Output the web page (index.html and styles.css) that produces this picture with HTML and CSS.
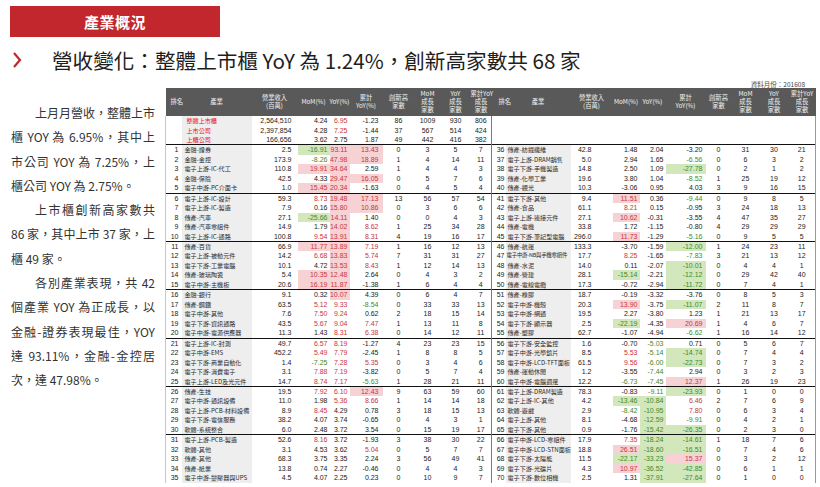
FILE: index.html
```html
<!DOCTYPE html>
<html lang="zh-Hant">
<head>
<meta charset="utf-8">
<title>產業概況</title>
<link rel="stylesheet" href="styles.css">
</head>
<body>
<div class="banner">產業概況</div>
<div class="title">
  <svg class="chev" viewBox="0 0 10 16"><polyline points="2,1 8,8 2,15"/></svg>
  <h1>營收變化：整體上市櫃 YoY 為 1.24%，創新高家數共 68 家</h1>
</div>
<div class="main">
  <div class="intro">
    <p class="ln first">上月月營收，整體上市</p>
    <p class="ln">櫃 YOY 為 6.95%，其中上</p>
    <p class="ln">市公司 YOY 為 7.25%，上</p>
    <p class="ln end">櫃公司 YOY 為 2.75%。</p>
    <p class="ln first">上市櫃創新高家數共</p>
    <p class="ln">86 家，其中上市 37 家，上</p>
    <p class="ln end">櫃 49 家。</p>
    <p class="ln first">各別產業表現，共 42</p>
    <p class="ln">個產業 YOY 為正成長，以</p>
    <p class="ln">金融-證券表現最佳，YOY</p>
    <p class="ln">達 93.11%，金融-金控居</p>
    <p class="ln end">次，達 47.98%。</p>
  </div>
  <div class="sheet">
    <div class="asof">資料月份：201608</div>
    <table class="grid">
      <thead>
        <tr>
          <th>排名</th><th>產業</th><th>營業收入<br>(百萬)</th><th>MoM(%)</th><th>YoY(%)</th><th>累計<br>YoY(%)</th><th>創新高<br>家數</th><th>MoM<br>成長<br>家數</th><th>YoY<br>成長<br>家數</th><th>累計YoY<br>成長<br>家數</th>
          <th>排名</th><th>產業</th><th>營業收入<br>(百萬)</th><th>MoM(%)</th><th>YoY(%)</th><th>累計<br>YoY(%)</th><th>創新高<br>家數</th><th>MoM<br>成長<br>家數</th><th>YoY<br>成長<br>家數</th><th>累計YoY<br>成長<br>家數</th>
        </tr>
      </thead>
      <tbody>
        <tr class="sum"><td></td><td>整體上市櫃</td><td>2,564,510</td><td>4.24</td><td class="up">6.95</td><td>-1.23</td><td>86</td><td>1009</td><td>930</td><td>806</td><td></td><td></td><td></td><td></td><td></td><td></td><td></td><td></td><td></td><td></td></tr>
        <tr class="sum"><td></td><td>上市公司</td><td>2,397,854</td><td>4.28</td><td class="up">7.25</td><td>-1.44</td><td>37</td><td>567</td><td>514</td><td>424</td><td></td><td></td><td></td><td></td><td></td><td></td><td></td><td></td><td></td><td></td></tr>
        <tr class="sum"><td></td><td>上櫃公司</td><td>166,656</td><td>3.62</td><td>2.75</td><td>1.87</td><td>49</td><td>442</td><td>416</td><td>382</td><td></td><td></td><td></td><td></td><td></td><td></td><td></td><td></td><td></td><td></td></tr>

        <tr class="grp"><td>1</td><td>金融-證券</td><td>2.5</td><td class="lo">-16.91</td><td class="hi">93.11</td><td class="hi">13.43</td><td>0</td><td>3</td><td>5</td><td>7</td><td>36</td><td>傳產-紡織纖維</td><td>42.8</td><td>1.48</td><td>2.04</td><td>-3.20</td><td>0</td><td>31</td><td>30</td><td>21</td></tr>
        <tr><td>2</td><td>金融-金控</td><td>173.9</td><td class="dn">-8.26</td><td class="hi">47.98</td><td class="hi">18.89</td><td>1</td><td>4</td><td>14</td><td>11</td><td>37</td><td>電子上游-DRAM銷售</td><td>5.0</td><td>2.94</td><td>1.65</td><td class="dn">-6.56</td><td>0</td><td>6</td><td>3</td><td>2</td></tr>
        <tr><td>3</td><td>電子上游-IC-代工</td><td>110.8</td><td class="hi">19.91</td><td class="hi">34.64</td><td>2.59</td><td>1</td><td>4</td><td>4</td><td>3</td><td>38</td><td>電子下游-手機製造</td><td>14.8</td><td>2.50</td><td>1.09</td><td class="lo">-27.78</td><td>0</td><td>2</td><td>1</td><td>2</td></tr>
        <tr><td>4</td><td>金融-保險</td><td>42.5</td><td>4.33</td><td class="hi">29.47</td><td class="hi">16.05</td><td>0</td><td>5</td><td>7</td><td>6</td><td>39</td><td>傳產-化學工業</td><td>19.6</td><td>3.80</td><td>1.04</td><td class="dn">-8.52</td><td>1</td><td>25</td><td>19</td><td>12</td></tr>
        <tr><td>5</td><td>電子中游-PC介面卡</td><td>1.0</td><td class="hi">15.45</td><td class="hi">20.34</td><td>-1.63</td><td>0</td><td>4</td><td>5</td><td>4</td><td>40</td><td>傳產-觀光</td><td>10.3</td><td>-3.06</td><td>0.95</td><td>4.03</td><td>3</td><td>9</td><td>16</td><td>15</td></tr>

        <tr class="grp"><td>6</td><td>電子上游-IC-設計</td><td>59.3</td><td class="up">8.73</td><td class="hi">19.48</td><td class="hi">17.13</td><td>13</td><td>56</td><td>57</td><td>54</td><td>41</td><td>電子下游-其他</td><td>9.4</td><td class="hi">11.51</td><td>0.36</td><td class="dn">-9.44</td><td>0</td><td>9</td><td>8</td><td>5</td></tr>
        <tr><td>7</td><td>電子上游-IC-製造</td><td>7.9</td><td>0.16</td><td class="hi">15.80</td><td class="hi">10.86</td><td>0</td><td>3</td><td>6</td><td>6</td><td>42</td><td>傳產-食品</td><td>61.1</td><td class="up">8.21</td><td>0.15</td><td>-0.95</td><td>3</td><td>24</td><td>18</td><td>13</td></tr>
        <tr><td>8</td><td>傳產-汽車</td><td>27.1</td><td class="lo">-25.66</td><td class="hi">14.11</td><td>1.40</td><td>0</td><td>0</td><td>4</td><td>3</td><td>43</td><td>電子上游-連接元件</td><td>27.1</td><td class="hi">10.62</td><td>-0.31</td><td>-3.55</td><td>4</td><td>47</td><td>35</td><td>27</td></tr>
        <tr><td>9</td><td>傳產-汽車零組件</td><td>14.9</td><td>1.79</td><td class="hi">14.02</td><td class="up">8.62</td><td>1</td><td>25</td><td>34</td><td>28</td><td>44</td><td>傳產-電機</td><td>33.8</td><td>1.72</td><td>-1.15</td><td>-0.80</td><td>4</td><td>29</td><td>29</td><td>29</td></tr>
        <tr><td>10</td><td>電子上游-IC-通路</td><td>100.8</td><td class="up">9.54</td><td class="hi">13.91</td><td class="up">8.31</td><td>4</td><td>19</td><td>16</td><td>17</td><td>45</td><td>電子下游-筆記型電腦</td><td>296.0</td><td class="hi">11.73</td><td>-1.29</td><td class="dn">-5.16</td><td>0</td><td>9</td><td>5</td><td>5</td></tr>

        <tr class="grp"><td>11</td><td>傳產-百貨</td><td>66.9</td><td class="hi">11.77</td><td class="hi">13.89</td><td class="up">7.19</td><td>1</td><td>16</td><td>12</td><td>13</td><td>46</td><td>傳產-航運</td><td>133.3</td><td>-3.70</td><td>-1.59</td><td class="lo">-12.00</td><td>1</td><td>24</td><td>23</td><td>11</td></tr>
        <tr><td>12</td><td>電子上游-被動元件</td><td>14.2</td><td class="up">6.68</td><td class="hi">13.83</td><td class="up">5.74</td><td>7</td><td>31</td><td>31</td><td>27</td><td>47</td><td class="tight">電子中游-NB與手機零組件</td><td>17.7</td><td class="up">8.25</td><td>-1.65</td><td class="dn">-7.83</td><td>3</td><td>21</td><td>13</td><td>12</td></tr>
        <tr><td>13</td><td>電子下游-工業電腦</td><td>10.1</td><td>4.72</td><td class="hi">13.53</td><td class="up">8.43</td><td>1</td><td>12</td><td>14</td><td>13</td><td>48</td><td>傳產-水泥</td><td>14.0</td><td>0.11</td><td>-2.07</td><td class="lo">-10.01</td><td>0</td><td>4</td><td>4</td><td>1</td></tr>
        <tr><td>14</td><td>傳產-玻璃陶瓷</td><td>5.4</td><td class="hi">10.35</td><td class="hi">12.48</td><td>2.64</td><td>0</td><td>4</td><td>3</td><td>2</td><td>49</td><td>傳產-營建</td><td>28.1</td><td class="lo">-15.14</td><td>-2.21</td><td class="lo">-12.12</td><td>0</td><td>29</td><td>42</td><td>40</td></tr>
        <tr><td>15</td><td>電子中游-主機板</td><td>20.6</td><td class="hi">16.19</td><td class="hi">11.87</td><td>-1.38</td><td>1</td><td>6</td><td>4</td><td>4</td><td>50</td><td>傳產-電線電纜</td><td>17.3</td><td>-0.72</td><td>-2.94</td><td class="lo">-11.72</td><td>0</td><td>7</td><td>4</td><td>1</td></tr>

        <tr class="grp"><td>16</td><td>金融-銀行</td><td>9.1</td><td>0.32</td><td class="hi">10.07</td><td>4.39</td><td>0</td><td>6</td><td>4</td><td>7</td><td>51</td><td>傳產-橡膠</td><td>18.7</td><td>-0.19</td><td>-3.32</td><td>-3.76</td><td>0</td><td>8</td><td>5</td><td>3</td></tr>
        <tr><td>17</td><td>傳產-鋼鐵</td><td>63.5</td><td class="up">5.12</td><td class="up">9.33</td><td class="dn">-8.54</td><td>0</td><td>33</td><td>33</td><td>13</td><td>52</td><td>電子中游-機殼</td><td>20.3</td><td class="hi">13.90</td><td>-3.75</td><td class="lo">-11.07</td><td>2</td><td>11</td><td>8</td><td>7</td></tr>
        <tr><td>18</td><td>電子中游-其他</td><td>7.6</td><td class="up">7.50</td><td class="up">9.24</td><td>0.62</td><td>2</td><td>18</td><td>15</td><td>14</td><td>53</td><td>電子中游-網通</td><td>19.5</td><td>2.27</td><td>-3.80</td><td>1.23</td><td>1</td><td>21</td><td>13</td><td>17</td></tr>
        <tr><td>19</td><td>電子下游-資訊通路</td><td>43.5</td><td class="up">5.67</td><td class="up">9.04</td><td class="up">7.47</td><td>1</td><td>13</td><td>11</td><td>8</td><td>54</td><td>電子下游-顯示器</td><td>2.5</td><td class="lo">-22.19</td><td>-4.35</td><td class="hi">20.69</td><td>1</td><td>4</td><td>6</td><td>7</td></tr>
        <tr><td>20</td><td>電子中游-電源供應器</td><td>11.3</td><td>1.43</td><td class="up">8.31</td><td class="up">6.38</td><td>0</td><td>14</td><td>12</td><td>11</td><td>55</td><td>傳產-塑膠</td><td>62.7</td><td>-1.07</td><td>-4.94</td><td class="dn">-6.62</td><td>1</td><td>16</td><td>14</td><td>12</td></tr>

        <tr class="grp"><td>21</td><td>電子上游-IC-封測</td><td>49.7</td><td class="up">6.57</td><td class="up">8.19</td><td>-1.27</td><td>4</td><td>23</td><td>23</td><td>15</td><td>56</td><td>電子下游-安全監控</td><td>1.6</td><td>-0.70</td><td class="dn">-5.03</td><td>0.71</td><td>0</td><td>5</td><td>6</td><td>7</td></tr>
        <tr><td>22</td><td>電子中游-EMS</td><td>452.2</td><td class="up">5.49</td><td class="up">7.79</td><td>-2.45</td><td>1</td><td>8</td><td>8</td><td>5</td><td>57</td><td>電子中游-光學鏡片</td><td>8.5</td><td class="up">5.53</td><td class="dn">-5.14</td><td class="lo">-14.74</td><td>0</td><td>7</td><td>4</td><td>4</td></tr>
        <tr><td>23</td><td>電子下游-商業自動化</td><td>1.4</td><td class="dn">-7.25</td><td class="up">7.28</td><td class="up">5.35</td><td>0</td><td>3</td><td>4</td><td>6</td><td>58</td><td>電子中游-LCD-TFT面板</td><td>61.5</td><td class="up">9.56</td><td class="dn">-6.00</td><td class="lo">-22.73</td><td>0</td><td>7</td><td>3</td><td>2</td></tr>
        <tr><td>24</td><td>電子下游-消費電子</td><td>3.1</td><td class="up">7.88</td><td class="up">7.19</td><td>-3.82</td><td>0</td><td>5</td><td>7</td><td>4</td><td>59</td><td>傳產-運動休閒</td><td>1.2</td><td>-3.55</td><td class="dn">-7.44</td><td>2.94</td><td>0</td><td>3</td><td>2</td><td>3</td></tr>
        <tr><td>25</td><td>電子上游-LED及光元件</td><td>14.7</td><td class="up">8.74</td><td class="up">7.17</td><td class="dn">-5.63</td><td>1</td><td>28</td><td>21</td><td>11</td><td>60</td><td>電子中游-電腦週邊</td><td>12.2</td><td class="dn">-6.73</td><td class="dn">-7.45</td><td class="hi">12.37</td><td>1</td><td>26</td><td>19</td><td>23</td></tr>

        <tr class="grp"><td>26</td><td>傳產-生技</td><td>19.5</td><td class="up">7.92</td><td class="up">6.10</td><td class="hi">12.43</td><td>9</td><td>63</td><td>59</td><td>60</td><td>61</td><td>電子上游-DRAM製造</td><td>78.3</td><td>-0.83</td><td class="dn">-9.11</td><td class="lo">-23.93</td><td>0</td><td>1</td><td>0</td><td>0</td></tr>
        <tr><td>27</td><td>電子中游-通訊設備</td><td>11.0</td><td>1.98</td><td class="up">5.36</td><td class="up">8.66</td><td>1</td><td>14</td><td>14</td><td>18</td><td>62</td><td>電子上游-IC-其他</td><td>4.2</td><td class="lo">-13.46</td><td class="lo">-10.84</td><td class="up">6.46</td><td>2</td><td>7</td><td>6</td><td>9</td></tr>
        <tr><td>28</td><td>電子上游-PCB-材料設備</td><td>8.9</td><td class="up">8.45</td><td>4.29</td><td>0.78</td><td>3</td><td>18</td><td>15</td><td>13</td><td>63</td><td>軟體-遊戲</td><td>2.9</td><td class="dn">-8.42</td><td class="lo">-10.95</td><td class="up">7.80</td><td>0</td><td>6</td><td>3</td><td>4</td></tr>
        <tr><td>29</td><td>電子下游-電信服務</td><td>38.2</td><td>4.07</td><td>3.74</td><td>-0.65</td><td>0</td><td>4</td><td>3</td><td>1</td><td>64</td><td>電子上游-其他</td><td>8.1</td><td>-4.68</td><td class="lo">-12.59</td><td class="dn">-9.91</td><td>0</td><td>4</td><td>2</td><td>1</td></tr>
        <tr><td>30</td><td>軟體-系統整合</td><td>6.0</td><td>2.48</td><td>3.72</td><td>3.54</td><td>0</td><td>15</td><td>19</td><td>17</td><td>65</td><td>電子下游-其他</td><td>0.9</td><td>-1.76</td><td class="lo">-15.42</td><td class="lo">-26.35</td><td>0</td><td>2</td><td>3</td><td>0</td></tr>

        <tr class="grp"><td>31</td><td>電子上游-PCB-製造</td><td>52.6</td><td class="up">8.16</td><td>3.72</td><td>-1.93</td><td>3</td><td>38</td><td>30</td><td>22</td><td>66</td><td>電子中游-LCD-零組件</td><td>17.9</td><td class="up">7.35</td><td class="lo">-18.24</td><td class="lo">-14.61</td><td>1</td><td>18</td><td>7</td><td>6</td></tr>
        <tr><td>32</td><td>軟體-其他</td><td>3.1</td><td>4.53</td><td>3.62</td><td class="up">5.04</td><td>0</td><td>5</td><td>7</td><td>7</td><td>67</td><td>電子中游-LCD-STN面板</td><td>18.8</td><td class="hi">26.51</td><td class="lo">-18.60</td><td class="lo">-16.51</td><td>0</td><td>7</td><td>4</td><td>6</td></tr>
        <tr><td>33</td><td>傳產-其他</td><td>68.3</td><td>3.75</td><td>3.35</td><td>2.24</td><td>3</td><td>56</td><td>49</td><td>41</td><td>68</td><td>電子下游-太陽能</td><td>11.5</td><td class="lo">-22.17</td><td class="lo">-33.23</td><td class="hi">15.37</td><td>0</td><td>3</td><td>2</td><td>12</td></tr>
        <tr><td>34</td><td>傳產-紙業</td><td>13.8</td><td>0.74</td><td>2.27</td><td>-0.46</td><td>0</td><td>4</td><td>4</td><td>3</td><td>69</td><td>電子下游-光碟片</td><td>4.3</td><td class="hi">10.97</td><td class="lo">-36.52</td><td class="lo">-42.85</td><td>0</td><td>6</td><td>1</td><td>1</td></tr>
        <tr><td>35</td><td>電子中游-變壓器與UPS</td><td>4.5</td><td>4.07</td><td>2.25</td><td>0.23</td><td>0</td><td>10</td><td>9</td><td>7</td><td>70</td><td>電子下游-數位相機</td><td>2.5</td><td>1.31</td><td class="lo">-37.91</td><td class="lo">-27.64</td><td>0</td><td>1</td><td>0</td><td>0</td></tr>
      </tbody>
    </table>
  </div>
</div>
</body>
</html>
```

FILE: styles.css
```css
* { box-sizing: border-box; margin: 0; padding: 0; }
html, body { background: #fff; }
body {
  width: 820px;
  height: 487px;
  overflow: hidden;
  font-family: "Noto Sans CJK TC", "Noto Sans", sans-serif;
  color: #222;
}

.banner {
  margin: 6px 0 0 10px;
  width: 210px;
  height: 31px;
  background: #c1272d;
  color: #fff;
  font-size: 15px;
  font-weight: 700;
  display: flex;
  align-items: center;
  justify-content: center;
  letter-spacing: 0.5px;
}

.title {
  display: flex;
  align-items: center;
  height: 40px;
  margin-top: 3px;
  padding-left: 12px;
}
.chev { width: 10px; height: 16px; margin-right: 30px; }
.chev polyline { fill: none; stroke: #c1272d; stroke-width: 2.2; }
.title h1 {
  font-size: 20.6px;
  font-weight: 400;
  color: #1e1e1e;
  white-space: nowrap;
}

.main { display: flex; }

.intro {
  width: 165px;
  padding: 21px 10px 0 11px;
  font-size: 12px;
  line-height: 24.3px;
  color: #333;
}
.ln { text-align: justify; text-align-last: justify; white-space: nowrap; }
.ln.first { text-indent: 24px; }
.ln.end { text-align-last: left; }

.sheet { width: 650px; }
.asof {
  height: 8px;
  font-size: 6.5px;
  line-height: 8px;
  text-align: right;
  padding-right: 10px;
  color: #444;
}

.grid {
  border-collapse: collapse;
  table-layout: fixed;
  width: 650px;
  font-family: "Liberation Sans", "Noto Sans CJK TC", sans-serif;
  font-size: 7px;
  color: #222;
}
.grid th {
  height: 28px;
  background: #595959;
  color: #f2f2f2;
  font-family: "Noto Sans CJK TC", "Liberation Sans", sans-serif;
  font-size: 6.3px;
  font-weight: 400;
  line-height: 8px;
  text-align: center;
  vertical-align: middle;
  white-space: nowrap;
  padding: 0;
}
.grid th:nth-child(1) { width: 16px; text-align: left; padding-left: 5px; }
.grid th:nth-child(2) { width: 70px; }
.grid th:nth-child(3) { width: 46px; }
.grid th:nth-child(4) { width: 32px; }
.grid th:nth-child(5) { width: 20px; }
.grid th:nth-child(6) { width: 33px; }
.grid th:nth-child(7) { width: 32px; }
.grid th:nth-child(8) { width: 26px; }
.grid th:nth-child(9) { width: 30px; }
.grid th:nth-child(10) { width: 21px; }
.grid th:nth-child(11) { width: 14px; text-align: left; padding-left: 7px; }
.grid th:nth-child(12) { width: 65px; }
.grid th:nth-child(13) { width: 42px; }
.grid th:nth-child(14) { width: 27px; }
.grid th:nth-child(15) { width: 26px; }
.grid th:nth-child(16) { width: 40px; }
.grid th:nth-child(17) { width: 26px; }
.grid th:nth-child(18) { width: 28px; }
.grid th:nth-child(19) { width: 29px; }
.grid th:nth-child(20) { width: 27px; }

.grid td {
  height: 9.5px;
  line-height: 9.4px;
  padding: 0;
  white-space: nowrap;
  overflow: hidden;
  text-align: center;
}
.grid td:nth-child(1) { text-align: right; padding-right: 3px; border-left: 1px solid #c8c8c8; }
.grid td:nth-child(11) { text-align: right; padding-right: 1px; border-left: 1px solid #7a7a7a; }
.grid td:nth-child(2),
.grid td:nth-child(12) {
  text-align: left;
  background: #eeeeee;
  font-family: "Noto Sans CJK TC", sans-serif;
  font-size: 6.1px;
  color: #2a2a2a;
}
.grid td:nth-child(2) { padding-left: 3px; }
.grid td:nth-child(12) { padding-left: 2px; }
.grid td.tight { font-size: 5.4px; letter-spacing: -0.2px; padding-left: 1px; }
.grid td:nth-child(3) { text-align: right; padding-right: 6px; }
.grid td:nth-child(4) { text-align: right; padding-right: 2px; }
.grid td:nth-child(5) { text-align: right; padding-right: 2px; }
.grid td:nth-child(6) { text-align: right; padding-right: 4px; }
.grid td:nth-child(13) { text-align: right; padding-right: 21px; }
.grid td:nth-child(14) { text-align: right; padding-right: 2px; }
.grid td:nth-child(15) { text-align: right; padding-right: 2px; }
.grid td:nth-child(16) { text-align: right; padding-right: 3px; }
.grid td:nth-child(20) { border-right: 1px solid #9a9a9a; }

.grid tr.sum td:nth-child(2) { color: #e3141b; padding-left: 5px; }
.grid tr.sum td:nth-child(12) { background: none; }
.grid tr.grp td { border-top: 1px solid #111; }

.grid td.up { color: #c8363f; }
.grid td.dn { color: #3f8a2a; }
.grid td.hi { color: #c8363f; background: #f6d2d4; }
.grid td.lo { color: #3f8a2a; background: #d3e7bd; }
```
